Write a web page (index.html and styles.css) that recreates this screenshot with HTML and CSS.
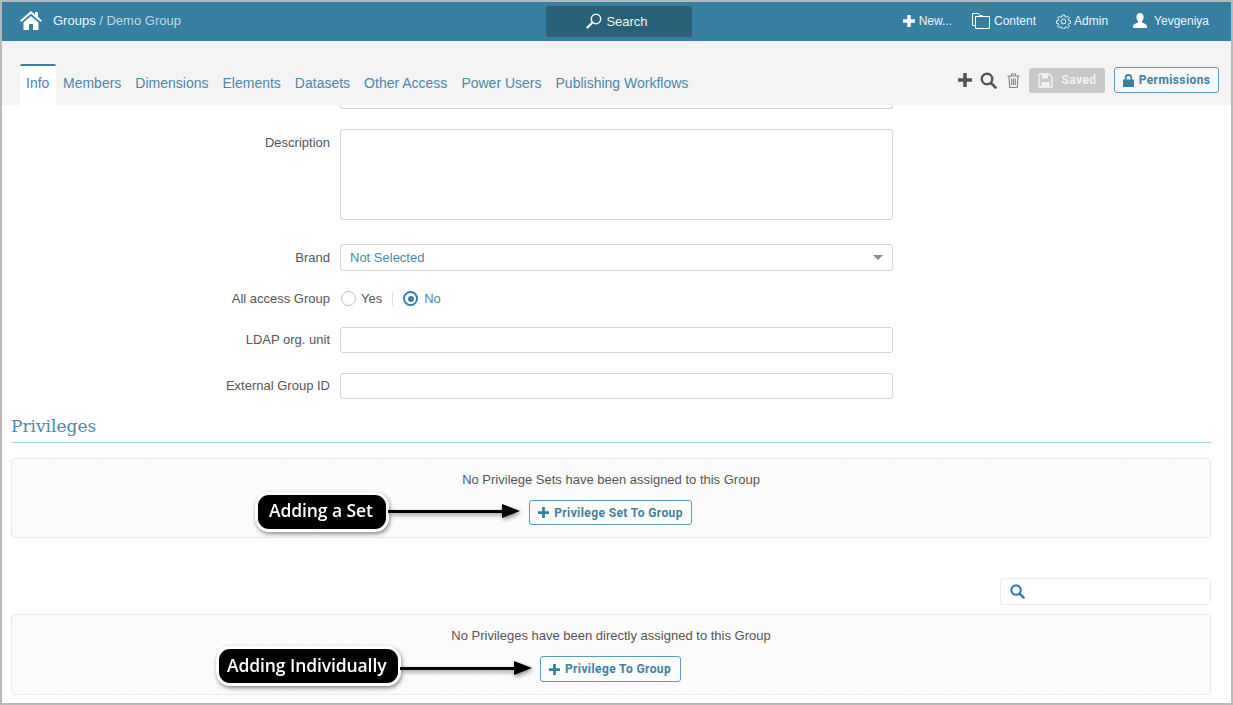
FILE: index.html
```html
<!DOCTYPE html>
<html lang="en">
<head>
<meta charset="utf-8">
<title>Groups / Demo Group</title>
<link rel="stylesheet" href="styles.css">
</head>
<body>
<div class="frame">
  <header class="topbar">
    <div class="crumbs">
      <svg class="home" viewBox="0 0 24 20" width="24" height="20"><path fill="#fff" d="M12 1 1 10.6l1.3 1.4L12 3.7 21.700 12 23 10.600l-4-3.500V2h-3v2.500zM4.500 12.500V20h5.500v-6h4v6h5.500v-7.500L12 6z"/></svg>
      <span class="crumb-main">Groups</span><span class="crumb-sub">&nbsp;/ Demo Group</span>
    </div>
    <div class="searchbtn">
      <svg viewBox="0 0 16 16" width="16" height="16"><circle cx="10" cy="6" r="4.700" fill="none" stroke="#fff" stroke-width="1.500"/><path d="M6.500 9.500 1.500 14.500" stroke="#fff" stroke-width="2.400" stroke-linecap="round"/></svg>
      <span>Search</span>
    </div>
    <nav class="topnav">
      <span class="topitem new"><svg viewBox="0 0 12 12" width="12" height="12"><path fill="#fff" d="M4.300 0h3.400v4.300H12v3.400H7.700V12H4.300V7.700H0V4.300h4.300z"/></svg>New...</span>
      <span class="topitem content"><svg viewBox="0 0 18 16" width="18" height="16"><path fill="none" stroke="#fff" stroke-width="1" d="M3.500 12.500H.5V.5h6l1 2h3v1M3.500 3.500h14v12h-14z"/></svg>Content</span>
      <span class="topitem admin"><svg viewBox="0 0 16 16" width="15" height="15"><circle cx="8" cy="8" r="2.500" fill="none" stroke="#fff"/><path fill="none" stroke="#fff" d="M6.800 1h2.400l.4 2 1.200.5L12.500 2.400l1.700 1.700-1.100 1.700.5 1.200 2 .4v2.400l-2 .4-.5 1.200 1.100 1.700-1.700 1.700-1.700-1.100-1.200.5-.4 2H6.800l-.4-2-1.200-.5-1.700 1.100-1.700-1.700 1.100-1.700-.5-1.200-2-.4V7.400l2-.4.500-1.200-1.100-1.700 1.700-1.700 1.700 1.100 1.200-.5z"/></svg>Admin</span>
      <span class="topitem user"><svg viewBox="0 0 16 16" width="16" height="16"><path fill="#fff" d="M8 0c2.300 0 3.600 1.700 3.600 4 0 1.700-.7 3.300-1.700 4.200v1.300c2.500.9 5.100 1.900 5.100 3.500V15H1v-2c0-1.600 2.600-2.600 5.100-3.500V8.200C5.100 7.300 4.400 5.700 4.400 4 4.400 1.700 5.700 0 8 0z"/></svg>Yevgeniya</span>
    </nav>
  </header>

  <div class="tabbar">
    <ul class="tabs">
      <li class="tab active">Info</li>
      <li class="tab">Members</li>
      <li class="tab">Dimensions</li>
      <li class="tab">Elements</li>
      <li class="tab">Datasets</li>
      <li class="tab">Other Access</li>
      <li class="tab">Power Users</li>
      <li class="tab">Publishing Workflows</li>
    </ul>
    <div class="tools">
      <svg class="tool-plus" viewBox="0 0 14 14" width="14" height="14"><path fill="#555" d="M5.200 0h3.600v5.200H14v3.600H8.800V14H5.200V8.800H0V5.200h5.200z"/></svg>
      <svg class="tool-search" viewBox="0 0 17 17" width="17" height="17"><circle cx="7" cy="7" r="5.300" fill="none" stroke="#555" stroke-width="2.400"/><path d="m11 11 4.500 4.500" stroke="#555" stroke-width="2.600" stroke-linecap="round"/></svg>
      <svg class="tool-trash" viewBox="0 0 13 15" width="13" height="15"><path fill="none" stroke="#8a7f7a" stroke-width="1.100" d="M.5 3h12M2 3l.7 11.500h7.600L11 3M4.500 3V1h4v2M4.700 5.500v6.500M6.500 5.500v6.500M8.300 5.500v6.500"/></svg>
      <button class="btn-saved" type="button"><svg viewBox="0 0 15 15" width="15" height="15"><path fill="none" stroke="#f1f1f1" stroke-width="1.500" d="M1 1h10l3 3v10H1z"/><path fill="#f1f1f1" d="M4 1h6v4.500H4zM3.500 9h8v5h-8z"/></svg>Saved</button>
      <button class="btn-outline btn-perm" type="button"><svg viewBox="0 0 12 14" width="11" height="13"><path fill="#377fa1" d="M1 6h10a1 1 0 0 1 1 1v6a1 1 0 0 1-1 1H1a1 1 0 0 1-1-1V7a1 1 0 0 1 1-1z"/><path fill="none" stroke="#377fa1" stroke-width="1.800" d="M2.900 6.500V4a3.100 3.100 0 0 1 6.200 0v2.500"/></svg>Permissions</button>
    </div>
  </div>

  <main class="page">
    <form class="form">
      <div class="sliver"></div>
      <div class="row row-desc">
        <label class="lbl">Description</label>
        <div class="field textarea"></div>
      </div>
      <div class="row row-brand">
        <label class="lbl">Brand</label>
        <div class="field select"><span>Not Selected</span><i class="caret"></i></div>
      </div>
      <div class="row row-radio">
        <label class="lbl">All access Group</label>
        <div class="radios">
          <span class="radio"></span><span class="radio-text">Yes</span>
          <span class="radio-sep"></span>
          <span class="radio on"></span><span class="radio-text blue">No</span>
        </div>
      </div>
      <div class="row row-ldap">
        <label class="lbl">LDAP org. unit</label>
        <div class="field input"></div>
      </div>
      <div class="row row-ext">
        <label class="lbl">External Group ID</label>
        <div class="field input"></div>
      </div>
    </form>

    <h2 class="section">Privileges</h2>

    <section class="panel panel-sets">
      <p>No Privilege Sets have been assigned to this Group</p>
      <button class="btn-outline btn-add" type="button"><svg viewBox="0 0 12 12" width="11" height="11"><path fill="#377fa1" d="M4.500 0h3v4.500H12v3H7.500V12h-3V7.500H0v-3h4.500z"/></svg>Privilege Set To Group</button>
      <div class="callout callout-set"><span class="pill">Adding a Set</span><span class="shaft"></span><span class="head"></span></div>
    </section>

    <div class="filter-row">
      <div class="filter"><svg viewBox="0 0 16 16" width="15" height="15"><circle cx="6.500" cy="6.500" r="5" fill="none" stroke="#377fa1" stroke-width="2.300"/><path d="m10.500 10.500 4 4" stroke="#377fa1" stroke-width="2.500" stroke-linecap="round"/></svg></div>
    </div>

    <section class="panel panel-ind">
      <p>No Privileges have been directly assigned to this Group</p>
      <button class="btn-outline btn-add" type="button"><svg viewBox="0 0 12 12" width="11" height="11"><path fill="#377fa1" d="M4.500 0h3v4.500H12v3H7.500V12h-3V7.500H0v-3h4.500z"/></svg>Privilege To Group</button>
      <div class="callout callout-ind"><span class="pill">Adding Individually</span><span class="shaft"></span><span class="head"></span></div>
    </section>
  </main>
</div>
</body>
</html>
```

FILE: styles.css
```css
* { box-sizing: border-box; }
html, body { margin: 0; height: 705px; overflow: hidden; background: #fff; }
body { font-family: "Liberation Sans", Arial, sans-serif; font-size: 13px; color: #555; }

.frame { width: 1233px; height: 705px; border: 2px solid #b9b9b9; display: flex; flex-direction: column; overflow: hidden; background: #fff; }

.topbar { height: 39px; flex: none; background: #377fa1; display: flex; align-items: center; position: relative; color: #fff; }
.crumbs { display: flex; align-items: center; padding-left: 17px; font-size: 13px; width: 544px; margin-top: -2px; }
.home { margin-right: 10px; margin-top: -1px; }
.crumb-main { color: #eef4f7; }
.crumb-sub { color: #c5d9e3; }
.searchbtn { width: 146px; height: 31px; background: #2a6078; border-radius: 3px; display: flex; align-items: center; justify-content: center; gap: 4px; font-size: 13px; color: #eef4f7; margin-top: -1px; padding-right: 4px; }
.topnav { margin-left: auto; display: flex; align-items: center; font-size: 12px; color: #eef4f7; padding-right: 22px; margin-top: -1px; }
.topitem { display: flex; align-items: center; }
.new svg { margin-right: 4px; }
.content { margin-left: 20px; }
.content svg { margin-right: 4px; }
.admin { margin-left: 20px; }
.admin svg { margin-right: 3px; }
.user { margin-left: 24px; }
.user svg { margin-right: 6px; }

.tabbar { height: 64px; flex: none; background: #f4f4f4; display: flex; align-items: flex-end; padding-left: 18px; position: relative; z-index: 1; }
.tabs { list-style: none; margin: 0; padding: 0; display: flex; height: 41px; }
.tab { padding: 11px 7px 0; font-size: 14px; color: #4d87a6; white-space: nowrap; }
.tab.active { background: #fff; border-top: 2px solid #377fa1; border-radius: 2px 2px 0 0; padding-top: 9px; padding-left: 6px; width: 36px; }
.tools { margin-left: auto; display: flex; align-items: center; padding: 0 12px 0 0; height: 50px; }
.tool-search { margin-left: 8px; }
.tool-trash { margin-left: 10px; }
.btn-saved { margin-left: 9px; width: 76px; height: 25px; border: 0; border-radius: 3px; background: #c9c9c9; color: #f1f1f1; font: 700 12px Roboto, sans-serif; letter-spacing: .4px; display: flex; align-items: center; justify-content: center; gap: 9px; padding: 0; }
.btn-outline { background: #fbfdfe; border: 1px solid #5c9ab8; border-radius: 3px; color: #41809f; font: 700 12px Roboto, sans-serif; letter-spacing: .4px; display: flex; align-items: center; justify-content: center; padding: 0; }
.btn-perm { margin-left: 9px; width: 105px; height: 26px; gap: 5px; background: #f6f8f9; }

.page { flex: 1; position: relative; padding: 0 20px 0 9px; }

.form { display: flex; flex-direction: column; }
.sliver { height: 4px; width: 553px; margin-left: 329px; border: 1px solid #d5d5d5; border-top: 0; border-radius: 0 0 3px 3px; }
.row { display: flex; align-items: center; }
.lbl { width: 319px; text-align: right; flex: none; color: #555; margin-right: 10px; }
.field { width: 553px; border: 1px solid #d5d5d5; border-radius: 3px; background: #fff; }
.row-desc { align-items: flex-start; margin-top: 20px; }
.row-desc .lbl { padding-top: 6px; }
.textarea { height: 91px; }
.row-brand { margin-top: 24px; }
.select { height: 27px; display: flex; align-items: center; justify-content: space-between; padding: 0 9px; color: #4d87a6; }
.caret { width: 0; height: 0; border: 5px solid transparent; border-top: 5px solid #8d8d8d; border-bottom: 0; }
.row-radio { margin-top: 14px; height: 27px; }
.radios { display: flex; align-items: center; margin-left: 1px; }
.radio { width: 15px; height: 15px; border: 1.500px solid #bcbcbc; border-radius: 50%; display: block; background: #fff; }
.radio.on { border: 2px solid #377fa1; position: relative; }
.radio.on::after { content: ""; position: absolute; left: 2.500px; top: 2.500px; width: 6px; height: 6px; background: #377fa1; border-radius: 50%; }
.radio-text { margin-left: 5px; color: #555; }
.radio-text.blue { color: #4d87a6; margin-left: 6px; }
.radio-sep { width: 1px; height: 14px; background: #e2e2e2; margin: 0 10px; }
.input { height: 26px; }
.row-ldap { margin-top: 15px; }
.row-ext { margin-top: 20px; }
.row-ldap .lbl, .row-ext .lbl { padding-bottom: 2px; }

.section { margin: 15px 0 15px; height: 29px; font: 400 17px/25px "DejaVu Serif", serif; color: #4d87a6; border-bottom: 1px solid #a6cde0; width: 1200px; }

.panel { width: 1200px; border: 1px solid #e9e9e9; border-radius: 4px; background: repeating-linear-gradient(135deg, #fafafa 0 2px, #fcfcfc 2px 4px); position: relative; display: flex; flex-direction: column; align-items: center; }
.panel p { margin: 0; line-height: 14px; color: #555; }
.panel-sets { height: 80px; padding-top: 14px; }
.panel-ind { height: 81px; padding-top: 14px; }
.btn-add { gap: 5px; }
.panel-sets .btn-add { width: 163px; height: 25px; margin: 13px 1px 0 0; }
.panel-ind .btn-add { width: 141px; height: 26px; margin: 13px 2px 0 0; }

.filter-row { display: flex; justify-content: flex-end; margin-top: 40px; }
.filter { width: 211px; height: 27px; border: 1px solid #ececec; border-radius: 3px; background: #fff; display: flex; align-items: center; padding-left: 9px; }
.filter-row + .panel { margin-top: 9px; }

.callout { position: absolute; display: flex; align-items: center; filter: drop-shadow(1px 2px 2px rgba(0,0,0,.45)); }
.callout-set { left: 243px; top: 33px; }
.callout-ind { left: 204px; top: 31px; }
.pill { background: #000; color: #fff; border: 3px solid #fff; border-radius: 14px; font: 600 17.500px/32px "Open Sans", sans-serif; height: 40px; white-space: nowrap; letter-spacing: -.1px; }
.callout-set .pill { padding: 0 13px 0 11px; line-height: 30px; }
.callout-ind .pill { padding: 0 12px 0 8px; }
.shaft { width: 115px; height: 3px; background: #000; margin-left: -1px; }
.callout-set .shaft, .callout-set .head { margin-top: -2px; }
.callout-ind .shaft, .callout-ind .head { margin-top: 4px; }
.head { width: 0; height: 0; border-left: 18px solid #000; border-top: 7.500px solid transparent; border-bottom: 7.500px solid transparent; margin-left: -1px; }
```
